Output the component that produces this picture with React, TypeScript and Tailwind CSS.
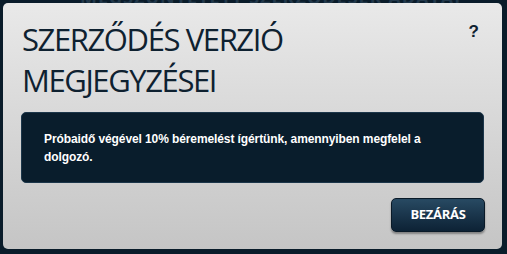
import React from "react";

export default function App() {
  return (
    <div className="relative w-[507px] h-[254px] overflow-hidden bg-[#0a1c2a]">
      {/* background page text, mostly covered by the modal */}
      <div
        className="absolute left-[80px] top-[-16px] text-[18px] font-bold tracking-[1px] text-[#22384a] whitespace-nowrap"
        style={{ fontFamily: '"Open Sans", sans-serif' }}
      >
        MEGSZÜNTETETT SZERZŐDÉSEK ADATAI
      </div>

      {/* modal */}
      <div className="absolute left-[3px] top-[3px] w-[499px] h-[246px] rounded-[5px] bg-gradient-to-b from-[#e9e9e9] to-[#c5c5c5] flex flex-col">
        <div className="flex justify-between pl-[19px] pr-[23px] pt-[16px]">
          <h1
            className="text-[#0e2130] text-[31px] leading-[41px] font-medium tracking-[-1.4px]"
            style={{ fontFamily: '"Open Sans", sans-serif' }}
          >
            SZERZŐDÉS VERZIÓ
            <br />
            MEGJEGYZÉSEI
          </h1>
          <span
            className="text-[#0e2130] text-[17px] leading-[20px] font-bold mt-[3px]"
            style={{ fontFamily: '"Liberation Sans", sans-serif' }}
          >
            ?
          </span>
        </div>

        <div className="mx-[18px] mt-[11px] h-[71px] rounded-[5px] bg-[#091d2c] border border-[#1c364a] px-[22px] pt-[17px]">
          <p
            className="text-white text-[12px] leading-[18px] font-bold tracking-[-0.1px] whitespace-nowrap"
            style={{ fontFamily: '"Liberation Sans", sans-serif' }}
          >
            Próbaidő végével 10% béremelést ígértünk, amennyiben megfelel a
            <br />
            dolgozó.
          </p>
        </div>

        <div className="flex justify-end pr-[17px] mt-[15px]">
          <button
            className="w-[94px] h-[34px] rounded-[5px] bg-gradient-to-b from-[#284a63] to-[#0d2235] border border-[#0a1a28] shadow-[0_2px_2px_rgba(0,0,0,0.35)] text-white text-[13px] font-bold tracking-[-0.3px]"
            style={{ fontFamily: '"Open Sans", sans-serif' }}
          >
            BEZÁRÁS
          </button>
        </div>
      </div>
    </div>
  );
}
